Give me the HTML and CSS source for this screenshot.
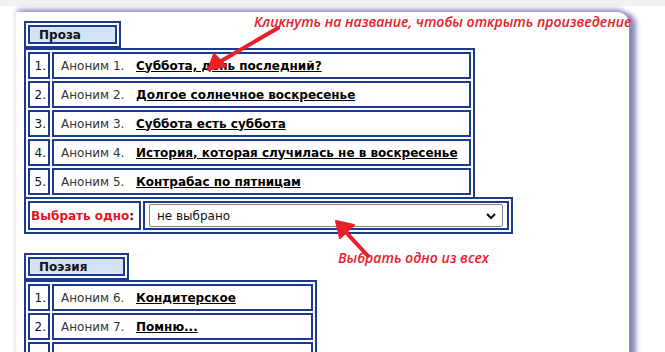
FILE: index.html
```html
<!DOCTYPE html>
<html lang="ru">
<head>
    <meta charset="UTF-8">
    <meta name="viewport" content="width=device-width, initial-scale=1.0">
    <title>Произведения</title>
    <link rel="stylesheet" href="styles.css">
</head>
<body>
    <div class="page">
        <div class="card">
            <!-- Проза -->
            <table class="tab"><tr><td>Проза</td></tr></table>
            <table class="list">
                <tr><td class="num">1.</td><td class="item"><span class="author">Аноним 1.</span><a href="#">Суббота, день последний?</a></td></tr>
                <tr><td class="num">2.</td><td class="item"><span class="author">Аноним 2.</span><a href="#">Долгое солнечное воскресенье</a></td></tr>
                <tr><td class="num">3.</td><td class="item"><span class="author">Аноним 3.</span><a href="#">Суббота есть суббота</a></td></tr>
                <tr><td class="num">4.</td><td class="item"><span class="author">Аноним 4.</span><a href="#">История, которая случилась не в воскресенье</a></td></tr>
                <tr><td class="num">5.</td><td class="item"><span class="author">Аноним 5.</span><a href="#">Контрабас по пятницам</a></td></tr>
            </table>
            <table class="choose">
                <tr>
                    <td class="choose-label"><span class="red">Выбрать одно</span>:</td>
                    <td class="choose-field">
                        <div class="select">
                            <span>не выбрано</span>
                            <svg width="12" height="8" viewBox="0 0 12 8"><path d="M2 2 L6 6 L10 2" fill="none" stroke="#111" stroke-width="2.2"/></svg>
                        </div>
                    </td>
                </tr>
            </table>

            <!-- Поэзия -->
            <table class="tab tab-poetry"><tr><td>Поэзия</td></tr></table>
            <table class="list list-poetry">
                <tr><td class="num">1.</td><td class="item"><span class="author">Аноним 6.</span><a href="#">Кондитерское</a></td></tr>
                <tr><td class="num">2.</td><td class="item"><span class="author">Аноним 7.</span><a href="#">Помню...</a></td></tr>
                <tr><td class="num"></td><td class="item"></td></tr>
            </table>

            <!-- подсказки -->
            <div class="note note-top">Кликнуть на название, чтобы открыть произведение</div>
            <div class="note note-bottom">Выбрать одно из всех</div>
            <svg class="arrow arrow-top" width="80" height="50" viewBox="0 0 80 50">
                <path d="M76 2 L14 38" stroke="#e8202a" stroke-width="4" stroke-linecap="round"/>
                <path d="M6 44 L12 28 L24 40 Z" fill="#e8202a" stroke="#e8202a" stroke-width="2" stroke-linejoin="round"/>
            </svg>
            <svg class="arrow arrow-bottom" width="50" height="45" viewBox="0 0 50 45">
                <path d="M40 40 L14 12" stroke="#e8202a" stroke-width="4" stroke-linecap="round"/>
                <path d="M8 5 L26 9 L12 22 Z" fill="#e8202a" stroke="#e8202a" stroke-width="2" stroke-linejoin="round"/>
            </svg>
        </div>
    </div>
</body>
</html>
```

FILE: styles.css
```css
:root {
    --line: #1c3b8c;
    --tab-bg: #d4e4f4;
    --note: #e8202a;
}

body {
    margin: 0;
    background-color: #fff;
    font-family: 'DejaVu Sans', Verdana, sans-serif;
    font-size: 12px;
    color: #222;
    overflow: hidden;
}

.page {
    background: linear-gradient(#f1f1f3 0, #f1f1f3 6px, #fff 6px);
    padding: 12px 0 0 15px;
    height: 340px;
}

.card {
    position: relative;
    width: 605px;
    height: 360px;
    padding: 9px 0 0 8px;
    background-color: #fff;
    border-left: 1px solid #ececec;
    border-top-right-radius: 12px;
    box-shadow: 8px 0 5px -1px #8b8bbb, 0 -5px 5px -2px #9d9cc8;
}

table {
    border-collapse: separate;
    border-spacing: 2px;
    border: 2px solid var(--line);
}

td {
    border: 2px solid var(--line);
    padding: 0;
}

.tab td {
    width: 76px;
    height: 15px;
    padding-left: 9px;
    background-color: var(--tab-bg);
    font-weight: bold;
    color: #111;
}

.tab-poetry {
    margin-top: 19px;
}

.tab-poetry td {
    width: 84px;
}

.list {
    width: 451px;
}

.list-poetry {
    width: 293px;
}

.list tr {
    height: 27px;
}

.num {
    width: 16px;
    padding-right: 2px;
    text-align: right;
    color: #111;
}

.item {
    padding-left: 7px;
    white-space: nowrap;
}

.author {
    display: inline-block;
    width: 75px;
    color: #333;
}

.item a {
    color: #000;
    font-weight: bold;
    text-decoration: underline;
}

.choose {
    width: 489px;
    margin-top: -2px;
}

.choose td {
    height: 25px;
}

.choose-label {
    width: 108px;
    padding-left: 1px;
    font-weight: bold;
    white-space: nowrap;
}

.red {
    color: #e2121c;
}

.choose-field {
    padding: 0 4px;
}

.select {
    display: flex;
    align-items: center;
    justify-content: space-between;
    height: 21px;
    padding: 0 5px 0 7px;
    border: 1px solid #858585;
    border-radius: 2px;
    color: #111;
}

.note {
    position: absolute;
    color: var(--note);
    font-family: 'Open Sans', sans-serif;
    font-style: italic;
    font-weight: 600;
    font-size: 14px;
    white-space: nowrap;
}

.note-top {
    left: 238px;
    top: 0;
}

.note-bottom {
    left: 322px;
    top: 236px;
}

.arrow {
    position: absolute;
}

.arrow-top {
    left: 186px;
    top: 14px;
}

.arrow-bottom {
    left: 312px;
    top: 204px;
}
```
